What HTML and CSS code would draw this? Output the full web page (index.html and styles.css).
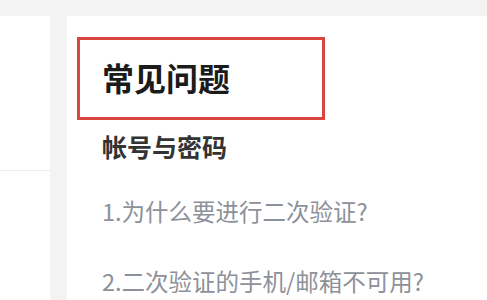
FILE: index.html
```html
<!DOCTYPE html>
<html lang="zh-CN">
<head>
<meta charset="utf-8">
<link rel="stylesheet" href="styles.css">
</head>
<body>
<div class="page">
  <aside class="side">
    <div class="side-top"></div>
    <div class="side-bottom"></div>
  </aside>
  <main class="card">
    <div class="title-box">
      <h1 class="title">常见问题</h1>
    </div>
    <h2 class="section">帐号与密码</h2>
    <ul class="questions">
      <li>1.为什么要进行二次验证?</li>
      <li>2.二次验证的手机/邮箱不可用?</li>
    </ul>
  </main>
</div>
</body>
</html>
```

FILE: styles.css
```css
html, body {
  margin: 0;
  padding: 0;
  height: 100%;
  overflow: hidden;
}
body {
  background: #f3f3f4;
  font-family: "Noto Sans CJK SC", "Noto Sans", sans-serif;
}
.page {
  display: flex;
  gap: 17px;
  padding-top: 16px;
  height: 100%;
  box-sizing: border-box;
}
.side {
  width: 50px;
  flex: none;
  background: #ffffff;
  display: flex;
  flex-direction: column;
}
.side-top {
  height: 154px;
  border-bottom: 1px solid #ededed;
}
.side-bottom {
  flex: 1;
}
.card {
  flex: 1;
  background: #ffffff;
  padding-top: 21px;
  overflow: hidden;
}
.title-box {
  margin-left: 10px;
  width: 248px;
  height: 83px;
  box-sizing: border-box;
  border: 3px solid #d9463f;
  display: flex;
  align-items: center;
  padding-left: 22px;
}
.title {
  margin: 0;
  font-size: 32px;
  font-weight: 700;
  line-height: 1;
  color: #1b1b1b;
  position: relative;
  top: -2px;
}
.section {
  margin: 9px 0 0 35px;
  font-size: 25px;
  font-weight: 700;
  line-height: 34px;
  color: #333333;
}
.questions {
  list-style: none;
  margin: 31px 0 0 35px;
  padding: 0;
  display: flex;
  flex-direction: column;
  gap: 36px;
}
.questions li {
  font-size: 23.5px;
  line-height: 34px;
  color: #8d9199;
}
```
